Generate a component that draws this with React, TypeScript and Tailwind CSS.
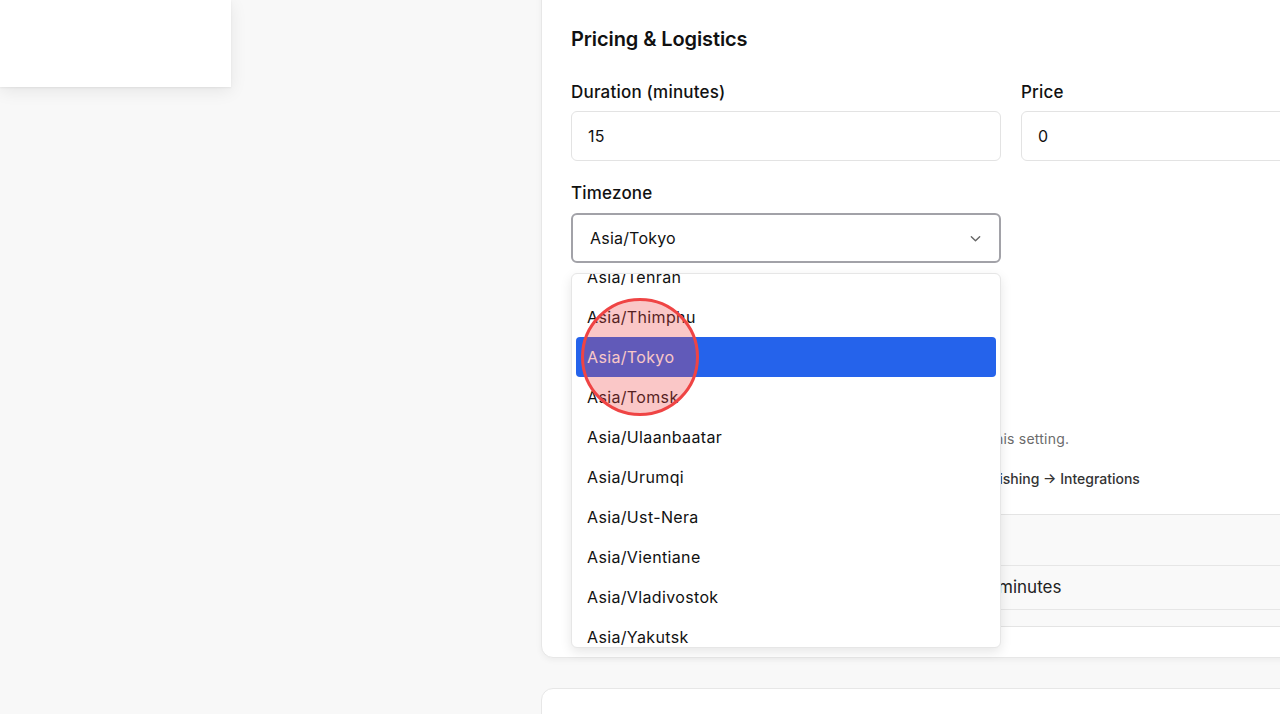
import React from "react";

const zones = [
  "Asia/Tehran",
  "Asia/Thimphu",
  "Asia/Tokyo",
  "Asia/Tomsk",
  "Asia/Ulaanbaatar",
  "Asia/Urumqi",
  "Asia/Ust-Nera",
  "Asia/Vientiane",
  "Asia/Vladivostok",
  "Asia/Yakutsk",
  "Asia/Yangon",
];

export default function App() {
  return (
    <div
      className="relative w-[1280px] h-[714px] overflow-hidden bg-[#f8f8f8] text-[#111]"
      style={{ fontFamily: "Inter, 'Noto Sans', sans-serif" }}
    >
      <div className="flex items-start">
        {/* left floating card */}
        <div className="w-[231px] h-[87px] shrink-0 bg-white shadow-[0_4px_16px_rgba(0,0,0,0.08),0_1px_2px_rgba(0,0,0,0.06)]" />

        {/* main column */}
        <div className="ml-[310px] w-[940px] shrink-0 flex flex-col">
          <div className="relative -mt-4 bg-white border border-[#e7e7e7] rounded-xl shadow-[0_2px_6px_rgba(0,0,0,0.05)] pt-[40px] px-[29px] pb-[30px]">
            <h2 className="text-[20px] leading-[28px] font-semibold tracking-[-0.1px]">
              Pricing &amp; Logistics
            </h2>

            <div className="mt-[27px] grid grid-cols-2 gap-x-5">
              <div>
                <label className="block text-[17px] leading-6 font-medium tracking-[0.2px]">Duration (minutes)</label>
                <div className="mt-[7px] h-[50px] border border-[#e3e3e3] rounded-md flex items-center px-4 text-[16px] tracking-[0.2px]">
                  15
                </div>
              </div>
              <div>
                <label className="block text-[17px] leading-6 font-medium tracking-[0.2px]">Price</label>
                <div className="mt-[7px] h-[50px] border border-[#e3e3e3] rounded-md flex items-center px-4 text-[16px] tracking-[0.2px]">
                  0
                </div>
              </div>
            </div>

            <div className="mt-5 grid grid-cols-2 gap-x-5">
              <div className="relative">
                <label className="block text-[17px] leading-6 font-medium tracking-[0.2px]">Timezone</label>
                <div className="mt-2 h-[50px] border-2 border-[#a2a2a8] rounded-md flex items-center justify-between pl-[17px] pr-[17px] text-[16px] tracking-[0.2px]">
                  <span>Asia/Tokyo</span>
                  <svg width="13" height="13" viewBox="0 0 14 14" fill="none">
                    <path d="M2.5 5l4.5 4.5L11.5 5" stroke="#666" strokeWidth="1.5" strokeLinecap="round" strokeLinejoin="round" />
                  </svg>
                </div>

                {/* dropdown list */}
                <div className="absolute left-0 right-0 top-[92px] z-20 h-[375px] overflow-hidden bg-white border border-[#e6e6e6] rounded-md shadow-[0_4px_12px_rgba(0,0,0,0.1)]">
                  <div className="-mt-[17px] px-[4px]">
                    {zones.map((z) => (
                      <div
                        key={z}
                        className={
                          z === "Asia/Tokyo"
                            ? "h-10 flex items-center pl-[11px] rounded-sm bg-[#2563eb] text-white text-[16px] tracking-[0.35px]"
                            : "h-10 flex items-center pl-[11px] text-[16px] tracking-[0.35px] text-[#111]"
                        }
                      >
                        {z}
                      </div>
                    ))}
                  </div>
                </div>
              </div>
              <div />
            </div>

            <div className="mt-[20px] flex flex-col">
              <div className="h-[54px]" />
              <div className="mt-[16px] flex items-center gap-2 text-[15px] h-[24px]">Send reminders</div>
              <div className="mt-[16px] h-[24px]" />
              <p className="mt-[12px] text-[14px] leading-5 text-[#6b6b6b] whitespace-nowrap tracking-[0.23px]">
                Bookings will be shown to clients in their local time based on this setting.
              </p>
              <p className="mt-[20px] text-[14px] leading-5 font-medium text-[#333] whitespace-nowrap">
                Connect Zoom or Meet to video conferencing in Settings → Publishing → Integrations
              </p>

              <div className="mt-[25px] border-t border-b border-[#e4e4e4] bg-[#f9f9f9]">
                <div className="h-[51px] border-b border-[#e6e6e6]" />
                <div className="h-[44px] border-b border-[#e6e6e6] flex items-center text-[17px] text-[#222]">
                  <span className="w-[405px] pl-4">Duration</span>
                  <span>15 minutes</span>
                </div>
                <div className="h-[16px]" />
              </div>
            </div>
          </div>

          <div className="mt-[30px] h-[200px] bg-white border border-[#e7e7e7] rounded-xl" />
        </div>
      </div>

      {/* click indicator */}
      <div className="absolute left-[581px] top-[298px] w-[118px] h-[118px] rounded-full border-[3px] border-[#ef4444] bg-[rgba(239,68,68,0.3)] z-30" />
    </div>
  );
}
